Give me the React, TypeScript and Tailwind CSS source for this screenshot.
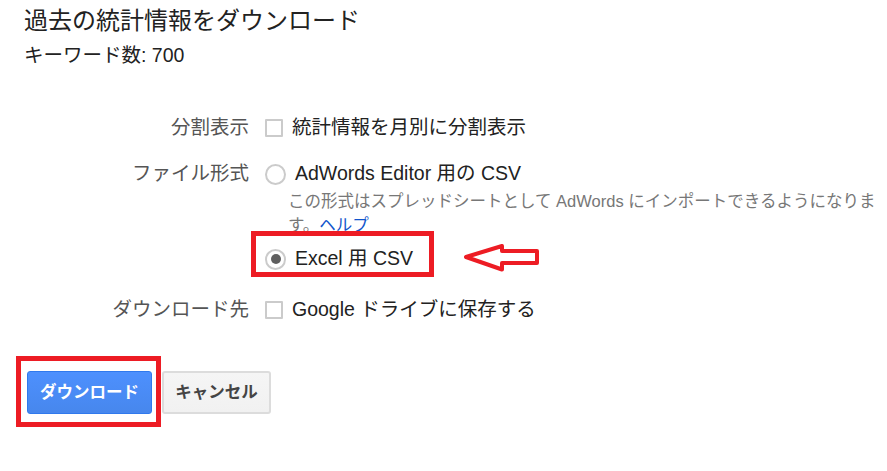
import React from "react";

const font = { fontFamily: '"Liberation Sans", "Noto Sans CJK JP", sans-serif' };

function Checkbox() {
  return <span className="inline-block w-[18px] h-[18px] shrink-0 border-2 border-[#cbcbcb] bg-white rounded-[1px]" />;
}

function Radio({ checked }: { checked?: boolean }) {
  return (
    <span className="inline-flex w-[21px] h-[21px] shrink-0 items-center justify-center rounded-full border-2 border-[#cbcbcb] bg-white">
      {checked && <span className="block w-[10px] h-[10px] rounded-full bg-[#5f5f5f]" />}
    </span>
  );
}

export default function App() {
  return (
    <div className="w-[887px] h-[471px] bg-white overflow-hidden" style={font}>
      <div className="pl-[24px] pt-[1px]">
        <div className="text-[24px] leading-[40px] text-[#222]">過去の統計情報をダウンロード</div>
        <div className="text-[19.5px] leading-[28px] text-[#222]">キーワード数: 700</div>
      </div>

      <div className="mt-[41px] flex items-center h-[36px] text-[19.5px]">
        <div className="w-[249px] text-right text-[#555]">分割表示</div>
        <div className="ml-[16px] flex items-center gap-[9px] text-[#222]">
          <Checkbox />
          <span>統計情報を月別に分割表示</span>
        </div>
      </div>

      <div className="mt-[13px] flex items-center h-[30px] text-[19.5px]">
        <div className="w-[249px] text-right text-[#555]">ファイル形式</div>
        <div className="ml-[16px] flex items-center gap-[9px] text-[#222]">
          <Radio />
          <span>AdWords Editor 用の CSV</span>
        </div>
      </div>

      <div className="ml-[288px] text-[16.5px] leading-[24px] text-[#777] whitespace-nowrap">
        この形式はスプレッドシートとして AdWords にインポートできるようになりま
        <br />
        す。<span className="text-[#1155cc]">ヘルプ</span>
      </div>

      <div className="-mt-[6px] flex items-start">
        <div className="ml-[251px] w-[183px] h-[46px] border-[5px] border-[#ed1c24] pt-[10px] pl-[9px] flex items-center gap-[9px] text-[19.5px] text-[#222]">
          <Radio checked />
          <span>Excel 用 CSV</span>
        </div>
        <svg className="ml-[28px] mt-[11px]" width="80" height="32" viewBox="0 0 80 32">
          <polygon
            points="4,15 40,4 40,9 75,9 75,21 40,21 40,27.5"
            fill="none"
            stroke="#ed1c24"
            strokeWidth="4"
            strokeLinejoin="round"
          />
        </svg>
      </div>

      <div className="mt-[15px] flex items-center h-[36px] text-[19.5px]">
        <div className="w-[249px] text-right text-[#555]">ダウンロード先</div>
        <div className="ml-[16px] flex items-center gap-[9px] text-[#222]">
          <Checkbox />
          <span>Google ドライブに保存する</span>
        </div>
      </div>

      <div className="mt-[28px] flex items-start">
        <div className="ml-[16px] w-[145px] h-[71px] border-[5px] border-[#ed1c24] pl-[6px] pt-[10px]">
          <button className="w-[125px] h-[43px] rounded-[3px] border border-[#3079ed] bg-gradient-to-b from-[#4d90fe] to-[#4787ed] text-white font-bold text-[16.5px] flex items-center justify-center">
            ダウンロード
          </button>
        </div>
        <button className="ml-[1px] mt-[15px] w-[109px] h-[43px] rounded-[3px] border-2 border-[#dcdcdc] bg-gradient-to-b from-[#f5f5f5] to-[#f1f1f1] text-[#444] font-bold text-[16.5px] flex items-center justify-center">
          キャンセル
        </button>
      </div>
    </div>
  );
}
